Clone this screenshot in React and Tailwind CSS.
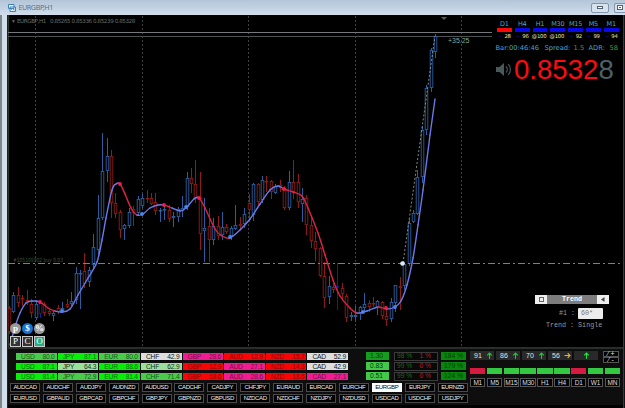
// high, low, body top, body bottom, direction
const CANDLES = [
  [306, 334, 308, 332, "r"], [292, 313, 295, 312, "b"], [287, 307, 295, 303, "r"], [295, 306, 298, 299, "r"],
  [290, 305, 300, 303, "r"], [299, 318, 304, 313, "r"], [300, 320, 304, 318, "b"], [300, 318, 303, 314, "n"],
  [302, 316, 304, 313, "r"], [308, 316, 311, 314, "r"], [310, 321, 313, 316, "b"], [305, 314, 308, 312, "r"],
  [302, 313, 308, 311, "b"], [299, 308, 304, 307, "r"], [292, 306, 301, 304, "b"], [267, 304, 273, 300, "b"],
  [270, 309, 273, 274, "b"], [253, 288, 271, 284, "r"], [267, 287, 270, 282, "b"], [234, 270, 247, 265, "b"],
  [195, 255, 218, 250, "b"], [133, 220, 171, 218, "b"], [138, 182, 156, 171, "b"], [150, 218, 156, 203, "r"],
  [193, 218, 203, 214, "r"], [210, 238, 212, 230, "r"], [224, 240, 225, 229, "b"], [208, 228, 212, 226, "b"],
  [206, 226, 209, 213, "r"], [196, 216, 199, 213, "b"], [194, 208, 198, 206, "b"], [190, 203, 198, 199, "r"],
  [193, 205, 198, 204, "r"], [193, 215, 202, 211, "r"], [208, 222, 210, 211, "b"], [204, 220, 209, 210, "b"],
  [205, 222, 210, 219, "r"], [212, 227, 216, 218, "b"], [207, 222, 209, 217, "b"], [196, 217, 208, 211, "b"],
  [172, 210, 178, 207, "b"], [168, 193, 178, 184, "r"], [160, 203, 184, 198, "r"], [172, 250, 198, 234, "r"],
  [198, 262, 228, 231, "b"], [208, 262, 226, 240, "r"], [218, 245, 226, 240, "b"], [216, 240, 226, 236, "r"],
  [212, 240, 227, 235, "b"], [224, 234, 227, 232, "r"], [226, 240, 228, 236, "b"], [205, 230, 225, 229, "b"],
  [217, 230, 224, 226, "r"], [208, 228, 214, 224, "b"], [194, 222, 203, 210, "r"], [183, 221, 184, 215, "b"],
  [183, 205, 184, 202, "r"], [176, 203, 180, 200, "b"], [176, 192, 181, 182, "r"], [180, 199, 181, 192, "r"],
  [184, 194, 186, 193, "b"], [180, 192, 185, 188, "r"], [186, 210, 188, 208, "r"], [171, 210, 182, 208, "b"],
  [160, 199, 182, 192, "r"], [174, 208, 182, 202, "r"], [188, 222, 199, 204, "b"], [195, 235, 198, 225, "r"],
  [215, 248, 225, 241, "r"], [232, 261, 241, 249, "r"], [247, 277, 248, 276, "r"], [262, 308, 276, 298, "r"],
  [276, 304, 286, 297, "b"], [283, 293, 287, 290, "r"], [263, 310, 286, 287, "n"], [283, 300, 288, 294, "r"],
  [294, 322, 296, 318, "r"], [312, 321, 315, 317, "b"], [306, 322, 315, 317, "b"], [306, 320, 307, 314, "b"],
  [293, 312, 304, 308, "b"], [300, 312, 303, 307, "r"], [297, 307, 303, 304, "r"], [300, 315, 301, 308, "b"],
  [301, 319, 302, 316, "r"], [309, 326, 316, 320, "r"], [298, 322, 302, 319, "b"], [285, 312, 285, 303, "b"],
  [277, 310, 286, 288, "r"], [262, 290, 264, 286, "b"], [219, 266, 223, 264, "b"], [210, 223, 213, 222, "b"],
  [170, 215, 177, 214, "b"], [126, 183, 130, 177, "b"], [85, 135, 88, 130, "b"], [48, 92, 50, 88, "b"],
  [34, 58, 36, 52, "b"],
];

const STROKE = { r: "#8e1c18", b: "#2a5f9f", n: "#1d1d94" };

const AVERAGE = [
  [10, 345], [15, 327], [20, 313], [26, 303], [32, 301], [40, 302], [48, 308], [55, 311], [62, 312], [70, 309],
  [78, 295], [88, 278], [97, 262], [102, 240], [106, 218], [112, 190], [116, 184], [120, 184], [125, 194],
  [131, 208], [137, 215], [143, 214], [150, 208], [158, 205], [164, 205], [172, 208], [180, 211], [186, 208],
  [194, 199], [199, 198], [205, 208], [215, 229], [222, 236], [230, 238], [240, 230], [250, 219], [260, 204],
  [270, 190], [278, 186], [284, 189], [293, 192], [302, 196], [308, 208], [318, 233], [325, 255], [333, 280],
  [340, 296], [350, 308], [357, 313], [367, 311], [378, 307], [387, 309], [395, 307], [401, 301], [407, 285],
  [413, 258], [418, 225], [423, 190], [430, 135], [435, 99],
];

// x ranges where the average is falling
const FALLING = [[40, 55], [120, 137], [164, 172], [199, 230], [284, 357], [378, 387]];

const DOTS = [
  [40, 302, "r"], [62, 311, "b"], [120, 184, "r"], [142, 214, "b"], [164, 205, "r"], [186, 207, "b"],
  [199, 198, "r"], [230, 237, "b"], [284, 189, "r"], [363, 312, "b"], [386, 308, "r"], [395, 307, "b"],
];

const segment = (i) => {
  const p0 = AVERAGE[Math.max(i - 1, 0)];
  const p1 = AVERAGE[i];
  const p2 = AVERAGE[i + 1];
  const p3 = AVERAGE[Math.min(i + 2, AVERAGE.length - 1)];
  return `M${p1} C${p1[0] + (p2[0] - p0[0]) / 6},${p1[1] + (p2[1] - p0[1]) / 6} ${p2[0] - (p3[0] - p1[0]) / 6},${p2[1] - (p3[1] - p1[1]) / 6} ${p2}`;
};

const isFalling = (x) => FALLING.some(([from, to]) => x >= from && x < to);

const PriceChart = () => (
  <svg className="absolute inset-0 h-full w-full" viewBox="8 15 615 332" fill="none">
    {/* Grid */}
    {[35.5, 142.5, 248.5, 355.5, 461.5].map((x) => (
      <path key={x} d={`M${x} 16V347`} stroke="#3d403d" strokeDasharray="2 2" />
    ))}
    <path d="M8.5 15V347" stroke="#2c3a2c" />
    <path d="M8 32.5H492" stroke="#75797b" />
    <path d="M8 36.5H492" stroke="#4d5153" />
    <path d="M441 17h6l-3 3z" fill="#4b6259" />

    {/* Candles */}
    {CANDLES.map(([high, low, top, bottom, dir], i) => {
      const x = Math.round(8.9 + 4.44 * i) + 0.5;
      return (
        <g key={i} stroke={STROKE[dir]}>
          <path d={`M${x} ${high}V${top}M${x} ${bottom}V${low}`} />
          <rect x={x - 1.3} y={top + 0.5} width="2.6" height={Math.max(bottom - top - 1, 0.5)} fill="#000" strokeWidth="0.9" />
        </g>
      );
    })}

    {/* Order */}
    <path d="M8 263.5H623" stroke="#5b9a5b" strokeDasharray="7 3 2 3" />
    <path d="M403 263L435 36" stroke="#a8aa96" strokeWidth="0.8" strokeDasharray="2 2" />

    {/* Moving average */}
    {AVERAGE.slice(0, -1).map(([x], i) => (
      <path key={x} d={segment(i)} stroke={isFalling(x) ? "#de2447" : "#6c79e6"} strokeWidth="1.4" strokeLinecap="round" />
    ))}
    {DOTS.map(([x, y, dir]) => (
      <circle key={x} cx={x} cy={y} r="1.9" fill={dir === "r" ? "#f21d43" : "#4c83ee"} />
    ))}
    <circle cx="402.5" cy="263.5" r="2.3" fill="#dfe8ee" />
    <text x="13" y="262" fill="#3d563d" fontSize="5.7" textLength="50" lengthAdjust="spacingAndGlyphs" fontFamily="DejaVu Sans, sans-serif">#105109302 buy 0.03</text>
    <text x="448" y="43.2" fill="#87a79c" fontSize="7" textLength="21.5" lengthAdjust="spacingAndGlyphs" fontFamily="Liberation Sans, sans-serif">+35.25</text>
  </svg>
);

const TIMEFRAMES = [
  ["D1", "- 28"], ["H4", "- 96"], ["H1", "@100"], ["M30", "@100"], ["M15", "- 92"], ["M5", "- 99"], ["M1", "- 94"],
];

const Speaker = () => (
  <svg className="ml-[2px] shrink-0" width="16" height="15" viewBox="0 0 16 15" fill="none" stroke="#48595a" strokeWidth="1.2">
    <path d="M0 5h3.5L8 1v13L3.5 10H0z" fill="#48595a" stroke="none" />
    <path d="M10 4.5c1.7 1.7 1.7 4.3 0 6M12.2 2.2c3 3 3 7.600 0 10.600" />
  </svg>
);

const Quote = () => (
  <div className="relative w-[129px] pt-[5px] font-['DejaVu_Sans',sans-serif]">
    <div className="flex gap-[3px] pl-[3px]">
      {TIMEFRAMES.map(([name, value], i) => (
        <div key={name} className="flex w-[14.8px] flex-col items-center whitespace-nowrap">
          <span className="h-[8px] text-[6.5px] leading-[8px] tracking-[-0.2px] text-[#4aa3cf]">{name}</span>
          <span className={`h-[4px] w-full ${i === 0 ? "bg-[#f80808]" : "bg-[#0909e8]"}`} />
          <span className="flex h-[8px] w-full justify-end pr-[1px] text-[5.3px] leading-[8px] tracking-[-0.2px] text-[#ece8b0]">
            {value.startsWith("-") && <span className="mr-[3px] text-[#2222f0]">–</span>}
            {value.replace("- ", "")}
          </span>
        </div>
      ))}
    </div>
    <div className="mt-[3px] flex h-[10px] items-center pl-[1.5px] text-[6.7px] leading-[10px] whitespace-nowrap text-[#4ba4d2]">
      <span className="w-[49px]">Bar:00:46:46</span>
      <span className="w-[29px]">Spread:</span>
      <span className="w-[15px] text-[#56963b]">1.5</span>
      <span className="w-[21px]">ADR:</span>
      <span className="text-[#56963b]">58</span>
    </div>
    <div className="mt-[3px] flex h-[27px] items-center">
      <Speaker />
      <span className="ml-[2px] font-['Liberation_Sans',sans-serif] text-[27.6px] leading-[27px] text-[#fb0c12]">
        0.8532<span className="text-[#4d6163]">8</span>
      </span>
    </div>
  </div>
);

const TrendBox = () => (
  <div className="mr-[14px] w-[74px] font-['Liberation_Mono',monospace] text-[6.7px] text-[#9a9a9a]">
    <div className="flex h-[9px] items-center bg-[#eeeeee] text-[#444]">
      <span className="flex w-[12px] justify-center"><span className="h-[5px] w-[5px] border border-[#666]" /></span>
      <span className="h-full flex-1 bg-[#7d7d7d] text-center leading-[9px] font-bold text-white">Trend</span>
      <span className="flex w-[12px] justify-center">
        <svg width="4" height="5" viewBox="0 0 4 5"><path d="M3.5 0v5L0 2.5z" fill="#444" /></svg>
      </span>
    </div>
    <div className="mt-[4px] flex h-[11px] items-center">
      <span className="w-[43px] pl-[24px] whitespace-pre">#1 :</span>
      <span className="h-[11px] w-[25px] rounded-[1px] bg-[#ececec] pl-[3px] leading-[11px] text-[#777]">60*</span>
    </div>
    <div className="mt-[2px] pl-[11px] leading-[9px] whitespace-nowrap">Trend : Single</div>
  </div>
);

const RoundButton = ({ color, children }) => (
  <span className={`flex h-[11px] w-[11px] items-center justify-center rounded-full text-[9px] leading-none font-bold text-white ${color}`}>{children}</span>
);

const SquareButton = ({ color, children }) => (
  <span className={`flex h-[11px] w-[11px] items-center justify-center border border-[#c9c9c9] text-[9px] leading-none text-white ${color}`}>{children}</span>
);

const CODES = ["USD", "JPY", "EUR", "CHF", "GBP", "AUD", "NZD", "CAD"];

const TONE = {
  g: "bg-[#4bcb4b] text-[#155c15]",
  G: "bg-[#0aed0a] text-[#087508]",
  l: "bg-[#9be09b] text-[#1b301b]",
  w: "bg-[#dedede] text-[#151515]",
  r: "bg-[#f80505] text-[#8f0505]",
  p: "bg-[#f21b91] text-[#781049]",
};

const STRENGTH = [
  [["80.0", "g"], ["87.1", "G"], ["80.0", "g"], ["42.9", "w"], ["28.6", "p"], ["12.9", "r"], ["15.7", "r"], ["52.9", "w"]],
  [["87.1", "G"], ["64.3", "l"], ["88.6", "G"], ["62.9", "l"], ["12.9", "r"], ["27.1", "p"], ["14.3", "r"], ["42.9", "w"]],
  [["81.4", "G"], ["72.9", "g"], ["81.4", "G"], ["71.4", "g"], ["18.6", "r"], ["28.6", "p"], ["18.6", "r"], ["27.1", "p"]],
];

const SUMMARY = [
  ["1.30", "98 %", "1 %", "184 %", "bg-[#159d20]"],
  ["0.83", "99 %", "0 %", "179 %", "bg-[#43c94a]"],
  ["0.51", "99 %", "0 %", "124 %", "bg-[#43c94a]"],
];

const PAIRS = [
  ["AUDCAD", "AUDCHF", "AUDJPY", "AUDNZD", "AUDUSD", "CADCHF", "CADJPY", "CHFJPY", "EURAUD", "EURCAD", "EURCHF", "EURGBP", "EURJPY", "EURNZD"],
  ["EURUSD", "GBPAUD", "GBPCAD", "GBPCHF", "GBPJPY", "GBPNZD", "GBPUSD", "NZDCAD", "NZDCHF", "NZDJPY", "NZDUSD", "USDCAD", "USDCHF", "USDJPY"],
];

const PERIODS = [
  ["M1", "r"], ["M5", "g"], ["M15", "g"], ["M30", "g"], ["H1", "g"], ["H4", "g"], ["D1", "r"], ["W1", "g"], ["MN", "g"],
];

const Arrow = ({ right, className }) => (
  <svg className={className} width="7" height="7" viewBox="0 0 7 7" fill="none" stroke="currentColor" strokeWidth="1.1">
    {right ? <path d="M.5 3.5h5.5M3.7 1.2 6 3.5 3.7 5.8" /> : <path d="M3.5 6.7V1M1.2 3.3 3.5 1l2.3 2.3" />}
  </svg>
);

const StrengthRow = ({ cells, summary }) => {
  const [ratio, up, down, range, ratioColor] = summary;
  return (
    <div className="flex h-[8px] items-center text-[6.7px] leading-[8px]">
      <div className="flex w-[332px] gap-[1px]">
        {cells.map(([value, tone], i) => (
          <div key={CODES[i]} className={`flex h-[7px] flex-1 justify-between pr-[2px] pl-[5px] leading-[7.5px] tracking-[-0.2px] ${TONE[tone]}`}>
            <span>{CODES[i]}</span>
            <span>{value}</span>
          </div>
        ))}
      </div>
      <span className={`ml-[18px] h-[8px] w-[23px] pl-[4px] text-[#073b0b] ${ratioColor}`}>{ratio}</span>
      <span className="ml-[5px] flex h-[9px] w-[44px] items-center justify-between border border-[#3b3b3b] bg-[#080808] pr-[6px] pl-[2px]">
        <span className="text-[#176e1b]">{up}</span>
        <span className="text-[#c9141f]">{down}</span>
      </span>
      <span className="ml-[3px] h-[8px] w-[25px] bg-[#08860d] text-center text-[#043c07]">{range}</span>
    </div>
  );
};

const Dashboard = () => (
  <div className="flex h-[58px] border-t-2 border-[#2b2d2d] bg-[#0e0e0e] font-['Liberation_Sans',sans-serif]">
    <div className="flex w-[462px] flex-col">
      <div className="mt-[3px] ml-[8px] flex flex-col gap-[2px]">
        {STRENGTH.map((cells, i) => (
          <StrengthRow key={i} cells={cells} summary={SUMMARY[i]} />
        ))}
      </div>
      <div className="mt-[3px] ml-[2px] flex flex-col gap-[2px]">
        {PAIRS.map((row, i) => (
          <div key={i} className="flex gap-[2.9px]">
            {row.map((pair) => (
              <span
                key={pair}
                className={`flex h-[9px] w-[30px] items-center justify-center border text-[6px] leading-[7px] tracking-[-0.35px] ${
                  pair === "EURGBP" ? "border-white bg-white text-black" : "border-[#4a4a4a] bg-black text-[#f0f0f0]"
                }`}
              >
                {pair}
              </span>
            ))}
          </div>
        ))}
      </div>
    </div>

    <div className="w-[153px] pt-[2px]">
      <div className="flex gap-[2px] text-[7px] leading-[9px] text-[#e2e2e2]">
        {["91", "86", "70", "56"].map((n) => (
          <span key={n} className="flex h-[9px] w-[24px] items-center justify-between bg-[#292929] pr-[1px] pl-[4px]">
            {n}
            <Arrow right={n === "56"} className={n === "56" ? "text-[#e7b32e]" : "text-[#21c93a]"} />
          </span>
        ))}
        <span className="flex h-[9px] w-[24px] items-center justify-center bg-[#292929]">
          <Arrow className="text-[#20e83a]" />
        </span>
        <span className="ml-[3px] flex w-[16px] flex-col text-center text-[7px] leading-[4px]">
          <span className="h-[6px] border border-[#555] bg-black">⁄ +</span>
          <span className="h-[6px] border border-[#555] bg-black">⁄ -</span>
        </span>
      </div>
      <div className="mt-[5px] flex w-[150px] gap-[1.4px] text-[6.5px] leading-[7px] tracking-[-0.2px] text-[#dedede]">
        {PERIODS.map(([name, tone]) => (
          <div key={name} className="flex flex-1 flex-col gap-[3.500px]">
            <span className={`h-[6px] ${tone === "r" ? "bg-[#d51b3f]" : "bg-[#35c943]"}`} />
            <span className="flex h-[9px] items-center justify-center border border-[#555] bg-black">{name}</span>
          </div>
        ))}
      </div>
    </div>
  </div>
);

const TitleBar = () => (
  <div className="flex h-[15px] items-center bg-linear-to-b from-[#b3c5d8] to-[#d0deec] pl-[8px] font-['Noto_Sans',sans-serif]">
    <svg width="8" height="8" viewBox="0 0 8 8" fill="#e7f0f8" stroke="#4080b8" strokeWidth="1">
      <path d="M.5.5h5.5v4H.5zM2 3h5.5v4.5H2z" />
      <path d="M3 5.5 4.5 4.5 6.500 6" />
    </svg>
    <span className="ml-[2.5px] text-[7.2px] leading-[15px] tracking-[-0.45px] text-[#5d6f80]">EURGBP,H1</span>
    <span className="ml-auto flex h-[10px] w-[18px] items-center justify-center rounded-[2px] border border-[#8295a9] bg-[#d6e2ed]">
      <span className="h-[3px] w-[6px] border border-[#56606c] bg-white" />
    </span>
    <span className="ml-[5px] flex h-[10px] w-[11px] items-center justify-center rounded-l-[2px] border border-r-0 border-[#8295a9] bg-[#d6e2ed]">
      <span className="flex h-[5px] w-[6px] items-center justify-center border border-[#56606c] bg-white">
        <span className="h-[1px] w-[2px] bg-[#56606c]" />
      </span>
    </span>
  </div>
);

const App = () => {
  return (
    <div className="flex h-[408px] w-[625px] flex-col overflow-hidden bg-black">
      <TitleBar />
      <div className="flex min-h-0 flex-1">
        {/* Window frame */}
        <div className="w-[8px] border-r border-l-2 border-r-[#19241f] border-l-[#7b858d] bg-[#d2dfeb]" />

        <div className="flex w-[615px] flex-col">
          <div className="relative flex h-[332px] flex-col justify-between">
            <PriceChart />
            <div className="flex justify-between">
              <div className="relative flex pt-[3px] pl-[4px] font-['DejaVu_Sans',sans-serif] text-[5.6px] leading-[7px] tracking-[-0.42px] whitespace-nowrap text-[#64706d]">
                <span className="w-[5px]">▾</span>
                <span className="w-[33px]">EURGBP,H1</span>
                <span>0.85265 0.85336 0.85239 0.85328</span>
              </div>
              <Quote />
            </div>
            <div className="relative flex items-end justify-between">
              <div className="flex flex-col gap-[2px] pl-[2px] font-['Liberation_Serif',serif]">
                <div className="flex gap-[1px]">
                  <RoundButton color="bg-[#999999]">p</RoundButton>
                  <RoundButton color="bg-[#1673cf]">$</RoundButton>
                  <RoundButton color="bg-[#999999]">%</RoundButton>
                </div>
                <div className="flex gap-[1px]">
                  <SquareButton color="bg-[#343434]">P</SquareButton>
                  <SquareButton color="bg-[#343434]">C</SquareButton>
                  <SquareButton color="bg-[#26ae82]">O</SquareButton>
                </div>
              </div>
              <div className="pb-[17px]">
                <TrendBox />
              </div>
            </div>
          </div>
          <Dashboard />
        </div>
        <div className="w-[2px] border-l border-[#353d3a] bg-[#101313]" />
      </div>
    </div>
  );
};

export default App;
